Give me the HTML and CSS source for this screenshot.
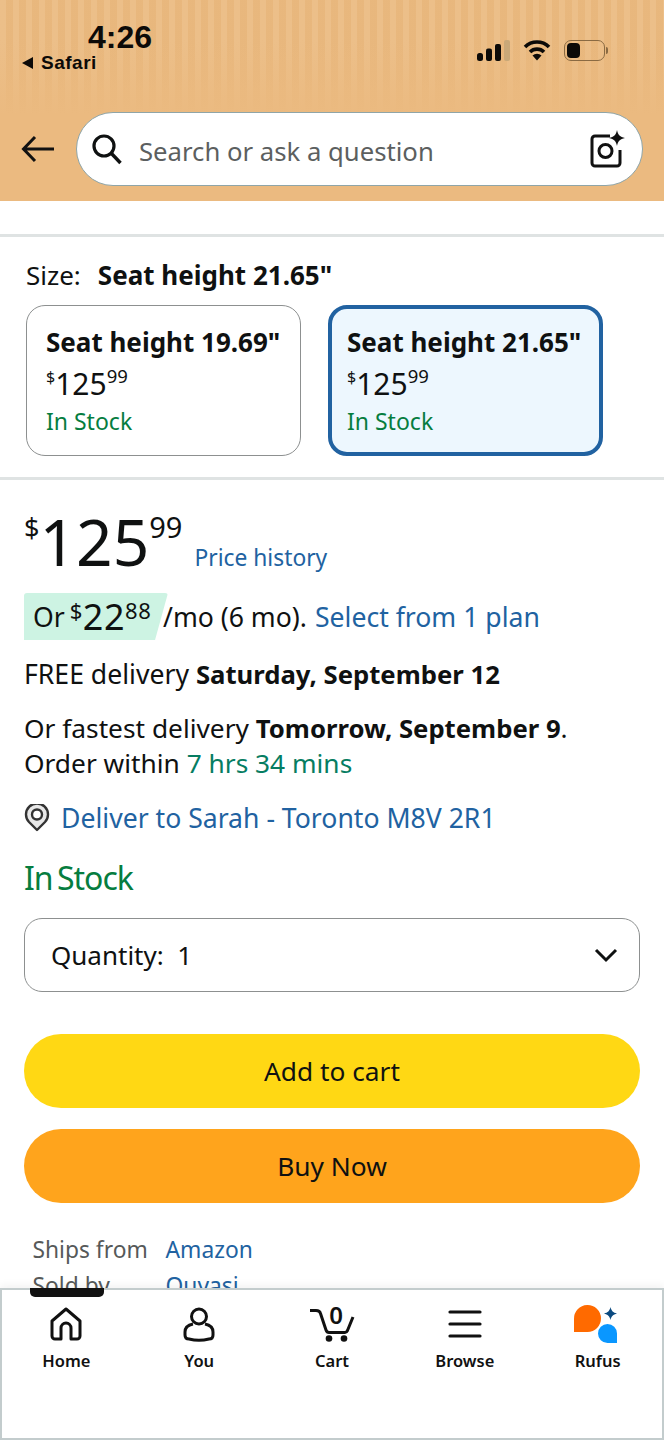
FILE: index.html
```html
<!DOCTYPE html>
<html lang="en">
<head>
    <meta charset="UTF-8">
    <meta name="viewport" content="width=device-width, initial-scale=1.0">
    <title>Product</title>
    <link rel="stylesheet" href="styles.css">
</head>
<body>
    <div class="page">
        <header class="header">
            <div class="status">
                <div class="status-left">
                    <div class="time">4:26</div>
                    <div class="back-app"><span class="back-tri"></span>Safari</div>
                </div>
                <div class="status-right">
                    <svg width="33" height="21" viewBox="0 0 33 21">
                        <rect x="0" y="13" width="6" height="8" rx="2.5" fill="#0c0a08"/>
                        <rect x="9" y="8.500" width="6" height="12.500" rx="2" fill="#0c0a08"/>
                        <rect x="18" y="4" width="6" height="17" rx="2" fill="#0c0a08"/>
                        <rect x="27" y="0" width="6" height="21" rx="2" fill="#c9a878"/>
                    </svg>
                    <svg width="28" height="21" viewBox="0 0 28 21">
                        <path d="M2 7 A17 17 0 0 1 26 7" fill="none" stroke="#0c0a08" stroke-width="3.600"/>
                        <path d="M7 12 A10 10 0 0 1 21 12" fill="none" stroke="#0c0a08" stroke-width="3.600"/>
                        <path d="M9.500 15.500 L14 20.500 L18.500 15.500 A6.500 6.500 0 0 0 9.500 15.500 Z" fill="#0c0a08"/>
                    </svg>
                    <div class="battery"><span class="battery-level"></span></div>
                    <span class="battery-tip"></span>
                </div>
            </div>
            <div class="search-row">
                <svg class="back-arrow" width="34" height="28" viewBox="0 0 34 28">
                    <path d="M33 14 H3 M14 2 L2.500 14 L14 26" fill="none" stroke="#111" stroke-width="3"/>
                </svg>
                <div class="search">
                    <svg width="32" height="32" viewBox="0 0 32 32">
                        <circle cx="13" cy="13" r="10" fill="none" stroke="#0f1111" stroke-width="3.200"/>
                        <path d="M20.500 20.500 L29.500 30" stroke="#0f1111" stroke-width="3.400" fill="none"/>
                    </svg>
                    <span class="search-text">Search or ask a question</span>
                    <svg class="lens" width="38" height="38" viewBox="0 0 38 38">
                        <path d="M22 6 H7 A3 3 0 0 0 4 9 V33 A3 3 0 0 0 7 36 H29 A3 3 0 0 0 32 33 V20" fill="none" stroke="#111" stroke-width="3"/>
                        <circle cx="17.500" cy="21" r="6.500" fill="none" stroke="#111" stroke-width="3"/>
                        <path d="M29 0 C30 5 32 7 37 8 C32 9 30 11 29 16 C28 11 26 9 21 8 C26 7 28 5 29 0 Z" fill="#111"/>
                    </svg>
                </div>
            </div>
        </header>

        <main class="content">
            <section class="size-section">
                <div class="size-label"><span>Size:</span><b>Seat height 21.65"</b></div>
                <div class="size-options">
                    <div class="size-card">
                        <div class="size-name">Seat height 19.69"</div>
                        <div class="size-price"><sup>$</sup>125<sup class="cents">99</sup></div>
                        <div class="stock">In Stock</div>
                    </div>
                    <div class="size-card selected">
                        <div class="size-name">Seat height 21.65"</div>
                        <div class="size-price"><sup>$</sup>125<sup class="cents">99</sup></div>
                        <div class="stock">In Stock</div>
                    </div>
                </div>
            </section>

            <section class="buy-section">
                <div class="price-row">
                    <div class="price"><sup>$</sup>125<sup class="cents">99</sup></div>
                    <a class="link price-history">Price history</a>
                </div>
                <div class="plan-row">
                    <div class="plan-badge">Or <span class="plan-price"><sup>$</sup>22<sup class="cents">88</sup></span></div>
                    <span class="plan-term">/mo (6 mo).</span>
                    <a class="link">Select from 1 plan</a>
                </div>
                <p class="line free">FREE delivery <b>Saturday, September 12</b></p>
                <p class="line fastest">Or fastest delivery <b>Tomorrow, September 9</b>.<br>Order within <span class="countdown">7 hrs 34 mins</span></p>
                <div class="deliver">
                    <svg width="26" height="28" viewBox="0 0 26 28">
                        <path d="M13 26 L5 18 A11 11 0 1 1 21 18 Z" fill="#e8e8e8" stroke="#333" stroke-width="2.400" stroke-linejoin="round"/>
                        <circle cx="13" cy="10.500" r="5" fill="#fff" stroke="#333" stroke-width="2.400"/>
                    </svg>
                    <a class="link">Deliver to Sarah - Toronto M8V 2R1</a>
                </div>
                <div class="big-stock">In Stock</div>
                <div class="quantity">
                    <span>Quantity:&nbsp; 1</span>
                    <svg width="24" height="15" viewBox="0 0 24 15">
                        <path d="M2 2 L12 12 L22 2" fill="none" stroke="#0f1111" stroke-width="3"/>
                    </svg>
                </div>
                <button class="btn btn-cart">Add to cart</button>
                <button class="btn btn-buy">Buy Now</button>
                <div class="seller">
                    <span class="seller-key">Ships from</span><a class="link">Amazon</a>
                    <span class="seller-key">Sold by</span><a class="link">Ouyasi</a>
                </div>
            </section>
        </main>

        <nav class="tabbar">
            <span class="tab-mark"></span>
            <div class="tab">
                <svg width="36" height="38" viewBox="0 -1 36 38">
                    <path d="M4 15 L18 3 L32 15 V30 A3 3 0 0 1 29 33 H23 V22 A5 5 0 0 0 13 22 V33 H7 A3 3 0 0 1 4 30 Z" fill="none" stroke="#111" stroke-width="3" stroke-linejoin="round"/>
                </svg>
                <span>Home</span>
            </div>
            <div class="tab">
                <svg width="36" height="38" viewBox="0 -1 36 38">
                    <circle cx="18" cy="10.500" r="7.500" fill="none" stroke="#111" stroke-width="3"/>
                    <path d="M12 18 C7 19 4 22 4 26 V29 C4 31 5 33 8 33 C14 34.500 22 34.500 28 33 C31 33 32 31 32 29 V26 C32 22 29 19 24 18" fill="none" stroke="#111" stroke-width="3"/>
                </svg>
                <span>You</span>
            </div>
            <div class="tab">
                <svg width="44" height="38" viewBox="0 0 44 38">
                    <path d="M0 5.500 H6 C8.500 5.500 10 6.500 10.500 8.500 L16 25 C16.500 26.500 17.500 27.500 19 27.500 H35 C36.500 27.500 37 26.500 37.500 25.500 L43 12" fill="none" stroke="#111" stroke-width="3"/>
                    <circle cx="19" cy="33.500" r="3.300" fill="#111"/>
                    <circle cx="34" cy="33.500" r="3.300" fill="#111"/>
                    <text class="cart-count" x="26" y="19">0</text>
                </svg>
                <span>Cart</span>
            </div>
            <div class="tab">
                <svg width="36" height="38" viewBox="0 -1 36 38">
                    <path d="M3 6 H33 M3 18 H33 M3 30 H33" fill="none" stroke="#111" stroke-width="3.200" stroke-linecap="round"/>
                </svg>
                <span>Browse</span>
            </div>
            <div class="tab">
                <svg width="48" height="38" viewBox="0 0 48 38">
                    <path d="M0 27 V14 A13.500 13.500 0 1 1 13.500 27 Z" fill="#ff6a00"/>
                    <path d="M43 38 H33.500 A9.500 9.500 0 1 1 43 28.500 Z" fill="#0a97ff"/>
                    <path d="M36.500 2 C37.500 6 39 7.500 43 8.500 C39 9.500 37.500 11 36.500 15 C35.500 11 34 9.500 30 8.500 C34 7.500 35.500 6 36.500 2 Z" fill="#0b4a80"/>
                </svg>
                <span>Rufus</span>
            </div>
        </nav>
    </div>
</body>
</html>
```

FILE: styles.css
```css
* {
    margin: 0;
    padding: 0;
    box-sizing: border-box;
}

body {
    font-family: 'Noto Sans', 'Open Sans', sans-serif;
    background-color: white;
    color: #0f1111;
}

.page {
    width: 664px;
    height: 1440px;
    display: flex;
    flex-direction: column;
    overflow: hidden;
}

sup {
    line-height: 0;
}

/* 상단 */
.header {
    height: 201px;
    flex-shrink: 0;
    background-color: #ebba80;
    background-image: linear-gradient(to bottom, rgba(235, 186, 128, 0) 40px, #ebba80 115px), repeating-linear-gradient(90deg, rgba(255, 255, 255, 0.07) 0, rgba(255, 255, 255, 0.07) 6px, rgba(150, 100, 40, 0.03) 6px, rgba(150, 100, 40, 0.03) 13px);
}

.status {
    height: 112px;
    display: flex;
    justify-content: space-between;
    padding: 21px 56px 0 22px;
}

.time {
    font-family: 'Liberation Sans', sans-serif;
    font-size: 32px;
    font-weight: bold;
    line-height: 32px;
    margin-left: 66px;
    color: #0c0a08;
}

.back-app {
    display: flex;
    align-items: center;
    gap: 8px;
    font-family: 'Liberation Sans', sans-serif;
    font-size: 19px;
    font-weight: bold;
    line-height: 19px;
    letter-spacing: 0.5px;
    color: #0c0a08;
}

.back-tri {
    border-style: solid;
    border-width: 6px 11px 6px 0;
    border-color: transparent #0c0a08 transparent transparent;
}

.status-right {
    display: flex;
    align-items: center;
    height: 24px;
    margin-top: 17px;
    gap: 13px;
}

.battery {
    width: 41px;
    height: 21px;
    border: 1.500px solid #8a6a42;
    border-radius: 7px;
    padding: 2px;
}

.battery-level {
    display: block;
    width: 13px;
    height: 100%;
    background-color: #0c0a08;
    border-radius: 4px;
}

.battery-tip {
    width: 2px;
    height: 7px;
    margin-left: -12px;
    background-color: #8a6a42;
    border-radius: 0 2px 2px 0;
}

.search-row {
    display: flex;
    align-items: center;
    padding-left: 21px;
    gap: 21px;
}

.search {
    width: 567px;
    height: 74px;
    display: flex;
    align-items: center;
    background-color: white;
    border: 1.500px solid #8fa5a8;
    border-radius: 37px;
    padding: 0 16px 0 14px;
}

.search-text {
    flex: 1;
    font-size: 25.700px;
    color: #5c5f5f;
    margin-left: 16px;
    padding-top: 4px;
}

/* 본문 */
.content {
    flex: 1;
    min-height: 0;
    overflow: hidden;
    padding-top: 33px;
}

.size-section {
    border-top: 3px solid #dfe3e3;
    border-bottom: 3px solid #dfe3e3;
    padding: 21px 26px 21px;
    height: 246px;
}

.size-label {
    display: flex;
    gap: 17px;
    font-size: 26px;
    line-height: 34px;
    margin-bottom: 13px;
}

.size-options {
    display: flex;
    gap: 27px;
}

.size-card {
    width: 275px;
    height: 151px;
    border: 1.500px solid #8d9090;
    border-radius: 19px;
    padding: 19px 0 0 19px;
}

.size-card.selected {
    background-color: #edf7fe;
    border: 4px solid #2162a1;
    padding: 16px 0 0 15px;
}

.size-name {
    font-size: 26px;
    font-weight: bold;
    line-height: 34px;
}

.size-price {
    font-size: 30px;
    line-height: 42px;
    margin-top: 4px;
}

.size-price sup {
    font-size: 16px;
    vertical-align: 12px;
}

.size-price .cents {
    font-size: 18.500px;
}

.stock {
    font-size: 23px;
    line-height: 32px;
    color: #067d3f;
}

.buy-section {
    padding: 0 24px;
}

.link {
    color: #2162a1;
}

.price-row {
    display: flex;
    align-items: flex-end;
    gap: 12px;
    height: 104px;
    padding-bottom: 9px;
}

.price {
    font-size: 64px;
    line-height: 84px;
    margin-bottom: -9px;
}

.price sup {
    font-size: 27px;
    vertical-align: 28px;
}

.price .cents {
    font-size: 29px;
}

.price-history {
    font-size: 22.800px;
    line-height: 34px;
}

.plan-row {
    display: flex;
    align-items: center;
    margin-top: 9px;
    height: 47px;
    font-size: 26.600px;
}

.plan-badge {
    height: 47px;
    width: 144px;
    flex-shrink: 0;
    display: flex;
    align-items: center;
    gap: 5px;
    padding-left: 9px;
    background-color: #cdf3e3;
    border-radius: 3px 3px 0 0;
    clip-path: polygon(0 0, 100% 0, 91% 100%, 0 100%);
}

.plan-price {
    font-size: 36px;
    letter-spacing: 0.5px;
}

.plan-price sup {
    font-size: 22px;
    vertical-align: 11px;
}

.plan-term {
    margin: 0 8px 0 -5px;
}

.line {
    font-size: 26.300px;
    line-height: 34px;
}

.line b {
    font-size: 25.700px;
}

.free {
    font-size: 26.600px;
    margin-top: 17px;
}

.fastest {
    margin-top: 19px;
}

.countdown {
    color: #067d62;
}

.deliver {
    display: flex;
    align-items: center;
    gap: 11px;
    margin-top: 20px;
    font-size: 26.600px;
    line-height: 36px;
}

.big-stock {
    font-size: 32px;
    line-height: 42px;
    color: #067d3f;
    margin-top: 21px;
    letter-spacing: -1px;
    word-spacing: -3px;
}

.quantity {
    height: 74px;
    display: flex;
    justify-content: space-between;
    align-items: center;
    margin-top: 19px;
    padding: 0 21px 0 26px;
    border: 1.500px solid #8d9090;
    border-radius: 18px;
    font-size: 26px;
}

.btn {
    display: block;
    width: 100%;
    height: 74px;
    border: none;
    border-radius: 37px;
    font-family: inherit;
    font-size: 26.300px;
    color: #0f1111;
}

.btn-cart {
    background-color: #ffd814;
    margin-top: 42px;
}

.btn-buy {
    background-color: #ffa41c;
    margin-top: 21px;
}

.seller {
    display: grid;
    grid-template-columns: 133px 1fr;
    margin: 29px 0 0 8.500px;
    font-size: 22.800px;
    line-height: 36px;
}

.seller-key {
    color: #565959;
}

/* 하단 탭 */
.tabbar {
    position: relative;
    height: 152px;
    flex-shrink: 0;
    display: grid;
    grid-template-columns: repeat(5, 1fr);
    background-color: white;
    padding-top: 17px;
    box-shadow: inset 0 0 0 2px #c3cccd, 0 -3px 8px rgba(0, 0, 0, 0.05);
}

.tab-mark {
    position: absolute;
    left: 30px;
    top: 0;
    width: 74px;
    height: 9px;
    background-color: #111;
    border-radius: 0 0 5px 5px;
}

.tab {
    display: flex;
    flex-direction: column;
    align-items: center;
    font-size: 16.500px;
    font-weight: 600;
    line-height: 22px;
    color: #111;
}

.tab svg {
    margin-bottom: 7px;
    overflow: visible;
}

.cart-count {
    font-family: 'Noto Sans', sans-serif;
    font-size: 24px;
    font-weight: 600;
    fill: #111;
    text-anchor: middle;
}
```
